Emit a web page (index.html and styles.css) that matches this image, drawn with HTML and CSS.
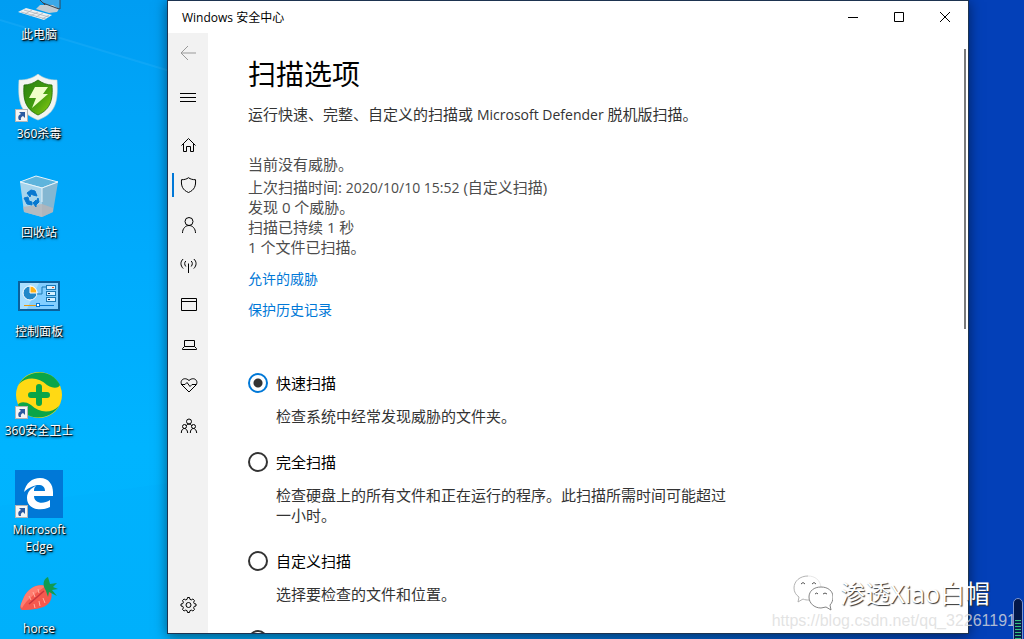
FILE: index.html
```html
<!DOCTYPE html>
<html lang="zh-CN">
<head>
  <meta charset="UTF-8">
  <meta name="viewport" content="width=device-width, initial-scale=1.0">
  <title>Windows 安全中心</title>
  <link rel="stylesheet" href="styles.css">
</head>
<body>
  <svg class="wallpaper" viewBox="0 0 1024 639" preserveAspectRatio="none" aria-hidden="true">
    <defs>
      <linearGradient id="sky" x1="0" y1="0" x2="0" y2="1">
        <stop offset="0" stop-color="#009df2"/>
        <stop offset="0.4" stop-color="#00aafd"/>
        <stop offset="0.7" stop-color="#00b4ff"/>
        <stop offset="1" stop-color="#00b2fc"/>
      </linearGradient>
    </defs>
    <rect width="170" height="639" fill="url(#sky)"/>
    <polygon points="0,20 170,71 170,639 0,639" fill="#00b4ff" opacity="0.12"/>
    <path d="M0 20L170 71" stroke="#5cc8ff" stroke-width="2" opacity="0.15"/>
    <polygon points="0,506 170,483 170,639 0,639" fill="#00a8f8" opacity="0.15"/>
  </svg>

  <svg class="sprite" aria-hidden="true">
    <symbol id="shortcut" viewBox="0 0 13 13">
      <rect x="0.5" y="0.5" width="12" height="12" fill="#f5f5f5" stroke="#b4b4b4"/>
      <path d="M4 3h6v6l-2-2c-2 1-2.500 2-2 4H4c-1.500-3-.5-5 2-6z" fill="#2c5aa0"/>
    </symbol>
  </svg>

  <div class="desktop">
    <ul class="shortcuts">
      <li>
        <svg viewBox="0 0 48 48">
          <path d="M14 14L45 10v24L30 30z" fill="#3aa8e8" stroke="#345" stroke-width="1"/>
          <path d="M38 30l6 4-2 3-8 1-13-4 4-4z" fill="#c2cbd2"/>
          <path d="M28 28l16 6" stroke="#34424e"/>
          <path d="M3 37l8-4 26 7-8 5z" fill="#eceff1"/>
          <path d="M6 37l25 7M9 35l25 7M10 39l7-4M15 41l8-4M21 42l7-4M27 44l7-4" stroke="#a3adb5" stroke-width="0.700" fill="none"/>
        </svg>
        <span>此电脑</span>
      </li>
      <li>
        <svg viewBox="0 0 48 48">
          <defs>
            <linearGradient id="green" x1="0" y1="0" x2="1" y2="1">
              <stop offset="0" stop-color="#2c8210"/>
              <stop offset="0.5" stop-color="#3f9a10"/>
              <stop offset="1" stop-color="#8fd010"/>
            </linearGradient>
          </defs>
          <path d="M23 0c5 4 11 6 19 6 1 20 0 33-19 40C4 39 3 26 4 6c8 0 14-2 19-6z" fill="#f2f5f2" stroke="#ccd6d0" stroke-width="0.600"/>
          <path d="M23 6c4 3 9 5 14 5 1 14-1 24-14 30C10 35 8 25 9 11c5 0 10-2 14-5z" fill="url(#green)" stroke="#1d6a08" stroke-width="0.800"/>
          <path d="M20 13h13l-5 7h5L17 34l4-10h-7z" fill="#efffc8"/>
          <use href="#shortcut" x="0" y="35" width="13" height="13"/>
        </svg>
        <span>360杀毒</span>
      </li>
      <li>
        <svg viewBox="0 0 48 48">
          <path d="M5 9l16-6 22 6-16 6z" fill="#5eb4dc" stroke="#e8f4fa"/>
          <path d="M5 9l22 6v29L9 39z" fill="#a6d4ec"/>
          <path d="M43 9l-16 6v29l11-5z" fill="#84b7d2"/>
          <path d="M8 34l19-3 11 4v4l-11 5-18-5z" fill="#b9b4b6" opacity="0.800"/>
          <path d="M5 9l22 6 16-6M27 15v14" fill="none" stroke="#e8f4fa"/>
          <path d="M12 20l4-3 4 1 2 5-4-1-2-1-1 3zM9 25l4-1 1 4 3 1v3l-5-1zM18 30l3-3v2l2-4 1 4-3 3 0 2z" fill="#0878d0" stroke="#0878d0"/>
        </svg>
        <span>回收站</span>
      </li>
      <li>
        <svg viewBox="0 0 48 48">
          <rect x="4" y="10" width="40" height="28" fill="#82ceff" stroke="#0b619c" stroke-width="2"/>
          <path d="M5 37V11h19L12 37z" fill="#a9dfff"/>
          <circle cx="15" cy="21" r="7" fill="#2288c8" stroke="#fff" stroke-width="1"/>
          <path d="M15 21v-7a7 7 0 0 1 7 7z" fill="#ffb219" stroke="#fff" stroke-width="1"/>
          <path d="M22 22h5v-7h4" fill="none" stroke="#1979b5"/>
          <g fill="#d6f0ff" stroke="#1979b5">
            <rect x="31.500" y="13.500" width="9" height="4"/>
            <rect x="31.500" y="19.500" width="9" height="4"/>
            <rect x="31.500" y="25.500" width="9" height="4"/>
          </g>
          <path d="M37 15.500h2" stroke="#f05a28"/>
          <path d="M33 21.500h2M33 27.500h2" stroke="#124"/>
          <path d="M9 33.500h13" stroke="#e89a10"/>
          <path d="M24 33.500h15" stroke="#0878d0"/>
          <rect x="21.500" y="31.500" width="3" height="3" fill="#fff" stroke="#0878d0"/>
        </svg>
        <span>控制面板</span>
      </li>
      <li>
        <svg viewBox="0 0 48 48">
          <circle cx="24" cy="24" r="23" fill="#ffd914"/>
          <path d="M4 13C12-1 36-4 45 14c-1 3-7 4-13 0C24 6 12 5 4 13z" fill="#0aa548"/>
          <path d="M44 35C36 49 12 52 3 34c1-3 7-4 13 0 8 8 20 9 28 1z" fill="#0aa548"/>
          <path d="M24 16v16M16 24h16" stroke="#0aa548" stroke-width="6" stroke-linecap="round"/>
          <use href="#shortcut" x="0" y="35" width="13" height="13"/>
        </svg>
        <span>360安全卫士</span>
      </li>
      <li>
        <svg viewBox="0 0 48 48">
          <rect width="48" height="48" fill="#0078d7"/>
          <path d="M9 22C11 13 17 8 25 8c9 0 13 7 13 14v4H19c0 7 9 9 16 4v7c-10 5-23 2-23-9 0-6 4-10 9-12-2 2-2 3-2 5h11c0-8-11-8-21 1z" fill="#fff"/>
          <use href="#shortcut" x="0" y="35" width="13" height="13"/>
        </svg>
        <span>Microsoft<br>Edge</span>
      </li>
      <li>
        <svg viewBox="0 -3 48 48">
          <path d="M9 25C13 16 23 11 31 14c7 4 7 12 3 17-5 6-17 7-27 7-4-2 0-7 2-13z" fill="#f4594e"/>
          <path d="M9 25C13 16 23 11 31 14c-9 6-19 13-24 22-3-2 0-6 2-11z" fill="#ff7d70"/>
          <path d="M14 32L29 19" stroke="#c8343c" stroke-width="1.500"/>
          <path d="M14 24l2 4M18 20l2 5M23 17l1 4M20 36l-1-4M25 34l-1-5M30 31l-2-5" stroke="#ffb0a4" stroke-width="1" fill="none"/>
          <path d="M29 15c-1-5 0-8 4-10l2 7 7-1-4 4 5 2-6 1 5 6-8-4-1 5-2-6z" fill="#129a50"/>
        </svg>
        <span>horse</span>
      </li>
    </ul>

    <div class="window">
      <header class="titlebar">
        <span class="title">Windows 安全中心</span>
        <button type="button" aria-label="最小化"><svg viewBox="0 0 10 10"><path d="M0 5.500h10"/></svg></button>
        <button type="button" aria-label="最大化"><svg viewBox="0 0 10 10"><path d="M.5.5h9v9h-9z"/></svg></button>
        <button type="button" aria-label="关闭"><svg viewBox="0 0 10 10"><path d="M0 0l10 10M10 0L0 10"/></svg></button>
      </header>

      <div class="panes">
        <nav class="sidebar">
          <button type="button" class="back" aria-label="返回"><svg viewBox="0 0 16 16"><path d="M16 8H1M8 1L1 8l7 7"/></svg></button>
          <button type="button" class="menu" aria-label="菜单"><svg viewBox="0 0 16 16"><path d="M0 4.500h16M0 8.500h16M0 12.500h16"/></svg></button>
          <button type="button" aria-label="主页"><svg viewBox="0 0 16 16"><path d="M1.500 8.500L8.500 1.500l7 7M3.500 7v7.500h3v-5h4v5h3V7"/></svg></button>
          <button type="button" class="active" aria-label="病毒和威胁防护"><svg viewBox="0 0 16 16"><path d="M8.500.7c2 1.500 4 2 7 2C16 9 14.500 13 8.500 15.500 2.500 13 1 9 1.500 2.700c3 0 5-.5 7-2z"/></svg></button>
          <button type="button" aria-label="帐户保护"><svg viewBox="0 0 16 16"><circle cx="9" cy="4.500" r="4"/><path d="M2.500 16c0-4.500 3-7.500 6.500-7.500s6.500 3 6.500 7.500"/></svg></button>
          <button type="button" aria-label="防火墙和网络保护"><svg viewBox="0 0 16 16"><path d="M8.500 6.500V16M5.800 9.500c-1.500-2-1.500-4 0-5.500M11.200 9.500c1.500-2 1.500-4 0-5.500M3.200 11.500c-3-3-3-7 0-9.500M13.800 11.500c3-3 3-7 0-9.500"/></svg></button>
          <button type="button" aria-label="应用和浏览器控制"><svg viewBox="0 0 16 16"><path d="M1.500 1.500h15v12h-15zM1.500 4.500h15"/></svg></button>
          <button type="button" aria-label="设备安全性"><svg viewBox="0 0 16 16"><path d="M4.500 3.500h10v6h-10zM4.500 9.500l-2 2v1h14v-1l-2-2"/></svg></button>
          <button type="button" aria-label="设备性能和运行状况"><svg viewBox="0 0 16 16"><path d="M9 15L2 8C-1 4 4-1 9 3.500 14-1 19 4 16 8zM1 7.500h4l2-2 3 4 2-2h4"/></svg></button>
          <button type="button" aria-label="家庭选项"><svg viewBox="0 0 16 16"><circle cx="9" cy="4.500" r="2.500"/><circle cx="4.500" cy="9.500" r="2"/><circle cx="13.500" cy="9.500" r="2"/><path d="M1.300 16c0-6 6-6 6.400 0M10.300 16c0-6 6-6 6.400 0M6 9c1-2.500 5-2.500 6 0"/></svg></button>
          <button type="button" class="settings" aria-label="设置"><svg viewBox="0 0 16 16"><circle cx="8.500" cy="8" r="2.500"/><path d="M7.100 2.300L7.500.5h2l.4 1.800 1.400.6L12.900 2l1.600 1.600-.9 1.600.6 1.400 1.800.4v2l-1.800.4-.6 1.400.9 1.600-1.600 1.600-1.600-.9-1.400.6-.4 1.800h-2l-.4-1.800-1.400-.6-1.600.9-1.600-1.600.9-1.600-.6-1.400L1 9V7l1.800-.4.6-1.400-.9-1.600L4.100 2l1.600.9z"/></svg></button>
        </nav>

        <main class="content">
          <h1>扫描选项</h1>
          <p class="intro">运行快速、完整、自定义的扫描或 <span class="latin">Microsoft Defender</span> 脱机版扫描。</p>

          <div class="status">
            <p class="headline">当前没有威胁。</p>
            <p>上次扫描时间: <span class="latin">2020/10/10 15:52</span> (自定义扫描)</p>
            <p>发现 0 个威胁。</p>
            <p>扫描已持续 1 秒</p>
            <p>1 个文件已扫描。</p>
          </div>

          <div class="links">
            <a href="#">允许的威胁</a>
            <a href="#">保护历史记录</a>
          </div>

          <form class="options">
            <div class="option">
              <input type="radio" name="scan" id="quick" checked>
              <label for="quick">快速扫描</label>
              <p>检查系统中经常发现威胁的文件夹。</p>
            </div>
            <div class="option">
              <input type="radio" name="scan" id="full">
              <label for="full">完全扫描</label>
              <p>检查硬盘上的所有文件和正在运行的程序。此扫描所需时间可能超过一小时。</p>
            </div>
            <div class="option">
              <input type="radio" name="scan" id="custom">
              <label for="custom">自定义扫描</label>
              <p>选择要检查的文件和位置。</p>
            </div>
            <div class="option">
              <input type="radio" name="scan" id="offline" aria-label="脱机版扫描">
            </div>
          </form>
        </main>
        <div class="scrollbar"></div>
      </div>
    </div>
  </div>

  <div class="watermark">
    <svg viewBox="0 0 40 36">
      <g fill="#fff" stroke-width="0.900">
        <path d="M15 1C7 1 1 6 1 13c0 4 2 7 5 9l-1 5 5-3c2 1 4 1 6 1" stroke="#aaa"/>
        <path d="M15 1c7 0 12 4 13 11" stroke="#e4e4e4"/>
        <path d="M28 12c-7 0-12 4-12 10s5 11 12 11l5-1 5 3-1-5c2-2 3-5 3-8 0-6-5-10-12-10z" stroke="#777"/>
      </g>
      <path d="M8 9q2-3 4 0M19 9q2-3 4 0M22 19q2-2 3 0M30 19q2-2 4 0" fill="none" stroke="#555"/>
    </svg>
    <span>渗透Xiao白帽</span>
  </div>
  <div class="source">https://blog.csdn.net/qq_32261191</div>
  <div class="meter"></div>
</body>
</html>
```
FILE: styles.css
```css
* {
  box-sizing: border-box;
}

body {
  margin: 0;
  overflow: hidden;
  font-family: "Open Sans", "Noto Sans CJK SC", sans-serif;
  font-size: 15px;
  line-height: 20px;
  color: #000;
  background: linear-gradient(90deg, #00a6fa 0%, #00a8f0 17%, #0468c8 60%, #0340b8 95%);
}

h1, p, ul {
  margin: 0;
  padding: 0;
}

button {
  display: flex;
  align-items: center;
  justify-content: center;
  padding: 0;
  border: 0;
  background: none;
}

.sprite {
  position: absolute;
  width: 0;
  height: 0;
}

.wallpaper {
  position: absolute;
  inset: 0;
  width: 100%;
  height: 100%;
}

/* Desktop */
.desktop {
  position: relative;
  display: flex;
  height: 100vh;
  overflow: hidden;
}

.shortcuts {
  display: grid;
  grid-auto-rows: 99px;
  align-content: start;
  width: 78px;
  height: 100%;
  margin-top: -25px;
  list-style: none;
}

.shortcuts li {
  display: flex;
  flex-direction: column;
  align-items: center;
  gap: 3px;
  font-size: 12px;
  line-height: 17px;
  text-align: center;
  white-space: nowrap;
  color: #fff;
  text-shadow: 1px 1px 1px #000, 1px 1px 3px #000;
}

.shortcuts svg {
  flex: none;
  width: 48px;
  height: 48px;
}

/* Window */
.window {
  display: flex;
  flex: 1;
  flex-direction: column;
  min-width: 0;
  margin: 0 55px 5px 89px;
  border: 1px solid #1d3350;
  background: #fff;
  box-shadow: 0 2px 12px rgba(0, 0, 0, 0.5);
}

.titlebar {
  display: flex;
  flex: none;
  height: 32px;
}

.title {
  flex: 1;
  padding-left: 14px;
  font-size: 12px;
  line-height: 34px;
}

.titlebar button {
  width: 46px;
}

.titlebar svg {
  width: 10px;
  height: 10px;
}

.titlebar svg, .sidebar svg {
  fill: none;
  stroke: #000;
  stroke-width: 1;
}

.panes {
  display: flex;
  flex: 1;
  min-height: 0;
}

.sidebar {
  display: flex;
  flex: none;
  flex-direction: column;
  width: 40px;
  background: #f2f2f2;
}

.sidebar button {
  height: 40px;
}

.sidebar svg {
  width: 16px;
  height: 16px;
  overflow: visible;
}

.sidebar .back svg {
  stroke: #999;
}

.sidebar .menu {
  margin: 4px 0 8px;
}

.sidebar .active {
  background: linear-gradient(#0078d7, #0078d7) 4px center / 2px 24px no-repeat;
}

.sidebar .settings {
  margin-top: auto;
  margin-bottom: 8px;
}

.content {
  flex: 1;
  padding: 23px 40px 0;
  overflow: hidden;
}

.scrollbar {
  flex: none;
  width: 2px;
  height: 280px;
  margin: 16px 2px 0 0;
  background: #7a7a7a;
}

h1 {
  font-size: 28px;
  font-weight: 400;
  line-height: 36px;
}

.latin {
  font-size: 14px;
  line-height: 1;
}

.intro {
  margin-top: 12px;
  color: #333;
}

.status {
  margin-top: 30px;
  color: #4c4c4c;
}

.status .headline {
  margin-bottom: 3px;
}

.links {
  display: flex;
  flex-direction: column;
  align-items: flex-start;
  gap: 11px;
  margin-top: 12px;
  font-size: 14px;
}

.links a {
  color: #0078d7;
  text-decoration: none;
}

.options {
  margin-top: 53px;
}

.option {
  display: grid;
  grid-template-columns: 20px 1fr;
  column-gap: 8px;
  row-gap: 13px;
  max-width: 486px;
  margin-bottom: 26px;
}

.option p {
  grid-column: 2;
  color: #333;
}

.option input {
  appearance: none;
  width: 20px;
  height: 20px;
  margin: 0;
  border: 2px solid #333;
  border-radius: 50%;
}

.option input:checked {
  border-color: #0078d7;
  background: radial-gradient(circle, #333 4px, #fff 5px);
}

/* Overlays */
.watermark {
  position: absolute;
  right: 34px;
  bottom: 28px;
  display: flex;
  align-items: center;
  gap: 7px;
  font-size: 25px;
  line-height: 36px;
  color: #fff;
  text-shadow: 1px 1px 1px #333;
}

.watermark svg {
  width: 40px;
  height: 36px;
}

.source {
  position: absolute;
  right: 8px;
  bottom: 8px;
  font-family: "Liberation Sans", sans-serif;
  font-size: 16px;
  color: rgba(220, 220, 220, 0.8);
}

.meter {
  position: absolute;
  right: 1px;
  bottom: -4px;
  width: 10px;
  height: 45px;
  border: 1px solid #7c95d0;
  border-radius: 5px;
  background: repeating-linear-gradient(#35c080 0 1px, #08204c 1px 3px) center bottom / 6px 22px no-repeat #031748;
}
```
